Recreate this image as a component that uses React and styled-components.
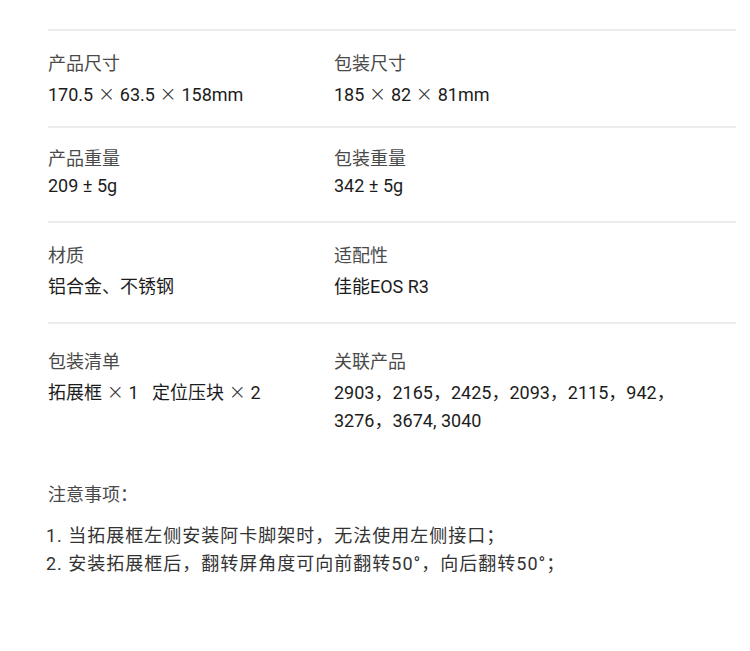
import styled, { createGlobalStyle } from "styled-components";

const GlobalStyle = createGlobalStyle`
  body {
    margin: 0;
    background: #fff;
    font-family: Roboto, "Noto Sans CJK SC", sans-serif;
  }
`;

const specs = [
  {
    pt: 22, gap: 5, pb: 18,
    cells: [
      { label: "产品尺寸", value: "170.5 × 63.5 × 158mm" },
      { label: "包装尺寸", value: "185 × 82 × 81mm" },
    ],
  },
  {
    pt: 20, gap: 1, pb: 22,
    cells: [
      { label: "产品重量", value: "209 ± 5g" },
      { label: "包装重量", value: "342 ± 5g" },
    ],
  },
  {
    pt: 22, gap: 5, pb: 22,
    cells: [
      { label: "材质", value: "铝合金、不锈钢" },
      { label: "适配性", value: "佳能EOS R3" },
    ],
  },
  {
    pt: 27, gap: 5, pb: 0,
    cells: [
      { label: "包装清单", value: "拓展框 × 1   定位压块 × 2" },
      { label: "关联产品", value: "2903，2165，2425，2093，2115，942，3276，3674, 3040" },
    ],
  },
];

const notes = [
  "1. 当拓展框左侧安装阿卡脚架时，无法使用左侧接口；",
  "2. 安装拓展框后，翻转屏角度可向前翻转50°，向后翻转50°；",
];

// render the multiplication sign wider, as in the reference
const renderValue = (text) =>
  text.split("×").map((part, i) => (
    <span key={i}>
      {i > 0 && <Times>×</Times>}
      {part}
    </span>
  ));

const App = () => {
  return (
    <Page>
      <GlobalStyle />
      <Table>
        {specs.map((row, i) => (
          <Row key={i} $pt={row.pt} $pb={row.pb}>
            {row.cells.map((c) => (
              <Cell key={c.label} $gap={row.gap}>
                <Label>{c.label}</Label>
                <Value>{renderValue(c.value)}</Value>
              </Cell>
            ))}
          </Row>
        ))}
      </Table>
      <Notes>
        <NotesTitle>注意事项：</NotesTitle>
        <NoteList>
          {notes.map((n) => (
            <Note key={n}>{n}</Note>
          ))}
        </NoteList>
      </Notes>
    </Page>
  );
};

export default App;

const Page = styled.div`
  width: 750px;
  height: 651px;
  padding: 29px 14px 0 48px;
  box-sizing: border-box;
`;

const Table = styled.div`
  display: flex;
  flex-direction: column;
`;

const Row = styled.div`
  display: grid;
  grid-template-columns: 286px 1fr;
  border-top: 2px solid #ececec;
  padding-top: ${(p) => p.$pt - 1}px;
  padding-bottom: ${(p) => p.$pb - 1}px;
`;

const Cell = styled.div`
  display: flex;
  flex-direction: column;
  gap: ${(p) => p.$gap}px;
`;

const Label = styled.div`
  font-size: 18px;
  line-height: 24px;
  color: #4a4a4a;
`;

const Value = styled.div`
  font-size: 18px;
  line-height: 28px;
  color: #1c1c1c;
  white-space: pre-wrap;
  padding-right: 60px;
`;

const Times = styled.span`
  font-family: "DejaVu Sans", sans-serif;
  font-size: 21px;
  line-height: 1;
  font-weight: 300;
  color: #333;
`;

const Notes = styled.div`
  margin-top: 48px;
  display: flex;
  flex-direction: column;
  gap: 15px;
`;

const NotesTitle = styled.div`
  font-size: 18px;
  line-height: 24px;
  color: #4a4a4a;
`;

const NoteList = styled.div`
  display: flex;
  flex-direction: column;
  margin-left: -2px;
`;

const Note = styled.div`
  font-size: 18px;
  line-height: 28px;
  color: #333;
  letter-spacing: 1px;
`;
